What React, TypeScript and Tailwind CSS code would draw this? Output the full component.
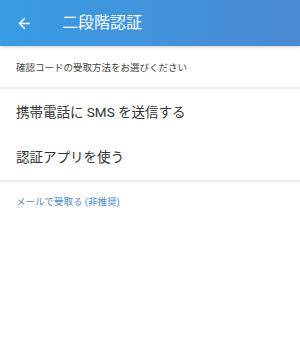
import { ArrowLeft } from 'lucide-react';

const font = { fontFamily: '"Roboto", "Noto Sans CJK JP", sans-serif' };

export default function App() {
  return (
    <div className="w-[300px] h-[357px] bg-white" style={font}>
      <header className="h-[46px] flex items-center bg-gradient-to-r from-[#379ce4] to-[#4a8ad3] shadow-[0_1px_3px_rgba(0,0,0,0.2)] text-white">
        <ArrowLeft className="ml-[16px] w-[17px] h-[17px]" strokeWidth={2} />
        <h1 className="ml-[29px] text-[16px] leading-[20px]">二段階認証</h1>
      </header>
      <p className="px-4 pt-[15px] pb-[12px] text-[9.5px] leading-[14px] text-[#444]">確認コードの受取方法をお選びください</p>
      <div className="h-[2px] bg-[#eeeeee]" />
      <div className="px-4 h-[46px] flex items-center text-[13.5px] text-[#333]">携帯電話に SMS を送信する</div>
      <div className="px-4 h-[45px] flex items-center text-[13.5px] text-[#333]">認証アプリを使う</div>
      <div className="h-[2px] bg-[#eeeeee]" />
      <div className="px-4 pt-[13px] text-[9.5px] leading-[14px] text-[#4a8ac9]">メールで受取る (非推奨)</div>
    </div>
  );
}
